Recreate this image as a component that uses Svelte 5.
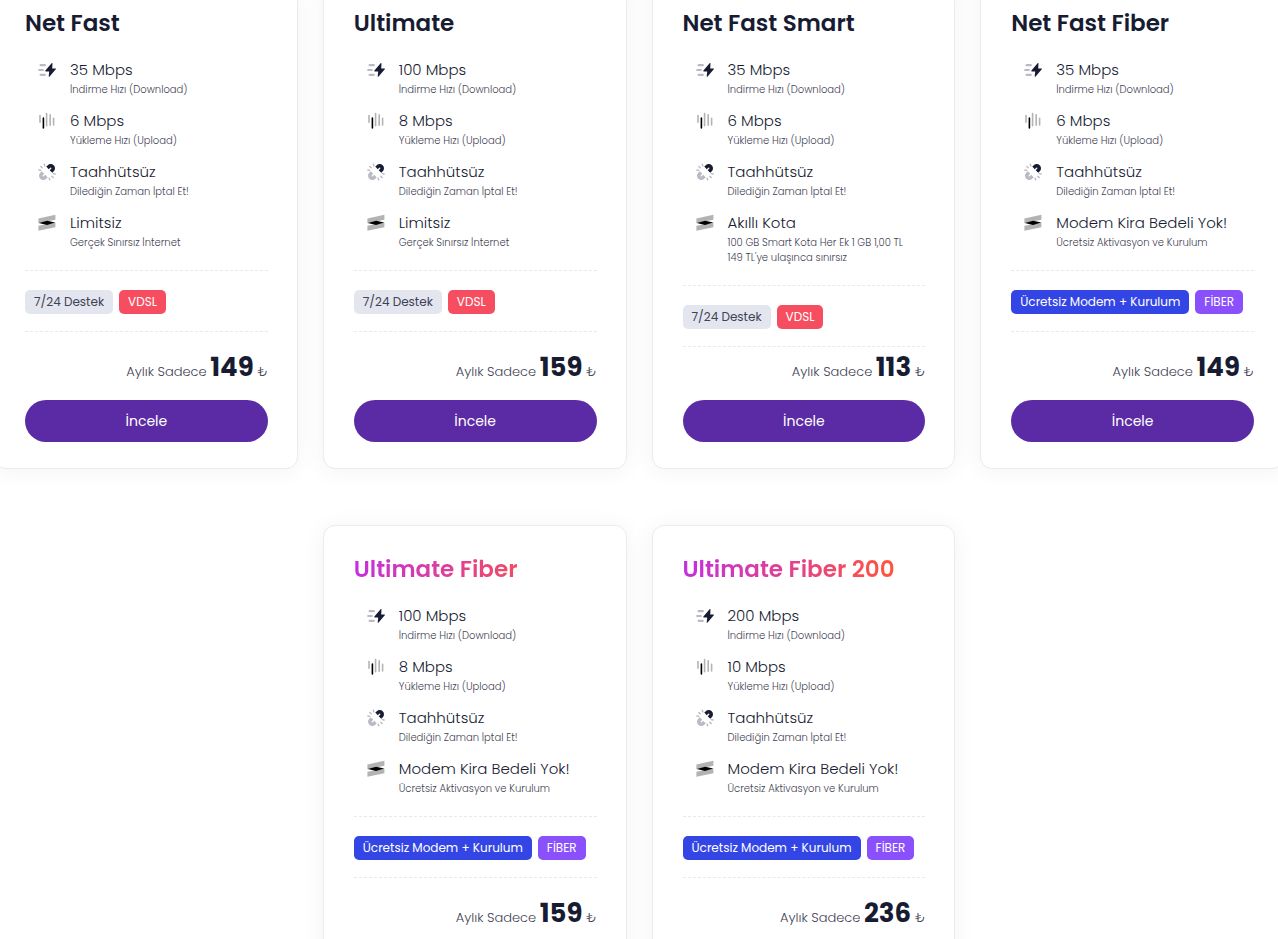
<script>
  const download = (speed) => ({ icon: 'speed', label: `${speed} Mbps`, note: 'İndirme Hızı (Download)' });
  const upload = (speed) => ({ icon: 'signal', label: `${speed} Mbps`, note: 'Yükleme Hızı (Upload)' });
  const noContract = { icon: 'unlink', label: 'Taahhütsüz', note: 'Dilediğin Zaman İptal Et!' };
  const unlimited = { icon: 'layers', label: 'Limitsiz', note: 'Gerçek Sınırsız İnternet' };
  const freeModem = { icon: 'layers', label: 'Modem Kira Bedeli Yok!', note: 'Ücretsiz Aktivasyon ve Kurulum' };
  const smartQuota = {
    icon: 'layers',
    label: 'Akıllı Kota',
    note: "100 GB Smart Kota Her Ek 1 GB 1,00 TL\n149 TL'ye ulaşınca sınırsız",
  };

  const vdsl = [
    { text: '7/24 Destek', kind: 'light' },
    { text: 'VDSL', kind: 'danger' },
  ];
  const fiber = [
    { text: 'Ücretsiz Modem + Kurulum', kind: 'primary' },
    { text: 'FİBER', kind: 'violet' },
  ];

  const plans = [
    { name: 'Net Fast', price: 149, badges: vdsl, features: [download(35), upload(6), noContract, unlimited] },
    { name: 'Ultimate', price: 159, badges: vdsl, features: [download(100), upload(8), noContract, unlimited] },
    { name: 'Net Fast Smart', price: 113, badges: vdsl, features: [download(35), upload(6), noContract, smartQuota] },
    { name: 'Net Fast Fiber', price: 149, badges: fiber, features: [download(35), upload(6), noContract, freeModem] },
    { name: 'Ultimate Fiber', price: 159, badges: fiber, highlight: true, features: [download(100), upload(8), noContract, freeModem] },
    { name: 'Ultimate Fiber 200', price: 236, badges: fiber, highlight: true, features: [download(200), upload(10), noContract, freeModem] },
  ];
</script>

<main class="plans">
  {#each plans as plan}
    <article class="card">
      <h2 class="card-title"><span class:highlight={plan.highlight}>{plan.name}</span></h2>

      <ul class="features">
        {#each plan.features as feature}
          <li class="feature">
            <svg class="feature-icon" viewBox="0 0 18 18" aria-hidden="true">
              {#if feature.icon === 'speed'}
                <path d="M2.6 4.2h4.2M1.2 9h3.6M2.6 13.8h4.2" fill="none" stroke="#b9bac3" stroke-width="2.2" stroke-linecap="round" />
                <path d="M13.6 2.2 7.4 9.6c-.3.4-.1.8.4.8h3.4l-.5 4.8c0 .6.5.8.9.3l6.2-7.2c.3-.4.1-.8-.4-.8h-3.2l.3-5c0-.5-.5-.7-.9-.3z" fill="#181c32" />
              {:else if feature.icon === 'signal'}
                <path d="M2 3.6v6.6M8.6 1.6v12.2M12.2 2.8v10.4M15.6 6.2v6.8" fill="none" stroke="#b3b3b3" stroke-width="1.6" stroke-linecap="round" />
                <path d="M5.4 6v10" fill="none" stroke="#000" stroke-width="1.6" stroke-linecap="round" />
              {:else if feature.icon === 'unlink'}
                <path d="m9.5 4.9 1.5-1.4a2.4 2.4 0 0 1 3.5 3.4l-1.5 1.5" fill="none" stroke="#181c32" stroke-width="3.6" />
                <path d="m5 9.6-1.5 1.5a2.4 2.4 0 0 0 3.5 3.4l1.5-1.4" fill="none" stroke="#b9bac3" stroke-width="3.6" />
                <path d="m6.3 1.2.5 1.7M2.8 3.4l1.4 1.3M.9 7l1.8.4M15.3 10.6l1.8.4M13.8 13.3l1.4 1.3M11.2 15.1l.5 1.7" fill="none" stroke="#b9bac3" stroke-width="1.4" stroke-linecap="round" />
              {:else}
                <path d="M.4 4.4 17.4.8v5L.4 9.2zM.4 11.8l17-3.4v4.8L.4 16.8z" fill="#b3b3b3" />
                <path d="m.8 9.1 8.4-2.3 8 1.6-8.2 2.6z" fill="#000" />
              {/if}
            </svg>
            <div>
              <div class="feature-label">{feature.label}</div>
              <div class="feature-note">{feature.note}</div>
            </div>
          </li>
        {/each}
      </ul>

      <div class="badges">
        {#each plan.badges as badge}
          <span class="badge {badge.kind}">{badge.text}</span>
        {/each}
      </div>

      <p class="price">Aylık Sadece <strong>{plan.price}</strong> ₺</p>
      <button class="btn" type="button">İncele</button>
    </article>
  {/each}
</main>

<style>
  :global(body) { margin: 0; background: #fff; overflow-x: hidden; }

  .plans { display: grid; grid-template-columns: repeat(4, 1fr); gap: 56px 25px; margin: -21px -6px 0; font-family: Poppins, Inter, 'Open Sans', sans-serif; color: #181c32; }
  .card { display: flex; flex-direction: column; box-sizing: border-box; min-width: 0; min-height: 490px; padding: 25px 29px 26px 30px; background: #fff; border: 1px solid #eaeaf1; border-radius: 12px; box-shadow: 0 2px 25px rgba(0, 0, 0, 0.05); }
  /* the last two plans sit in the middle columns */
  .card:nth-child(5) { grid-column-start: 2; }

  .card-title { margin: 0 0 17px; font-size: 23px; line-height: 36px; font-weight: 600; white-space: nowrap; }
  .highlight { display: block; background: linear-gradient(90deg, #c42ee0 0%, #ff5340 85%); -webkit-background-clip: text; background-clip: text; color: transparent; }

  .features { display: flex; flex-direction: column; gap: 12px; margin: 0; padding: 0 0 20px 13px; list-style: none; }
  .feature { display: flex; gap: 14px; }
  .feature-icon { flex: none; width: 18px; height: 18px; margin-top: 3px; }
  .feature-label { font-size: 15px; line-height: 24px; font-weight: 300; }
  .feature-note { font-size: 10px; line-height: 15px; font-weight: 300; color: #3f4254; white-space: pre-line; }

  .badges { display: flex; gap: 6px; padding: 19px 0 17px; border-top: 1px dashed #e8e9ef; border-bottom: 1px dashed #e8e9ef; }
  .badge { padding: 0 9px; border-radius: 5px; font-size: 12px; line-height: 24px; font-weight: 400; color: #fff; white-space: nowrap; }
  .light { background: #e4e6ef; color: #3f4254; }
  .danger { background: #f64e60; }
  .primary { background: #3445e5; }
  .violet { background: #8950fc; }

  .price { margin: auto 0 10px; padding-top: 2px; font-size: 13px; line-height: 36px; font-weight: 300; color: #3f4254; text-align: right; }
  .price strong { font-size: 26px; font-weight: 700; color: #181c32; }
  .btn { width: 100%; height: 42px; padding: 0; border: 0; border-radius: 21px; background: #5b2ba5; color: #fff; font-family: inherit; font-size: 14px; font-weight: 400; cursor: pointer; }
  .btn:hover { background: #4c2390; }
</style>
